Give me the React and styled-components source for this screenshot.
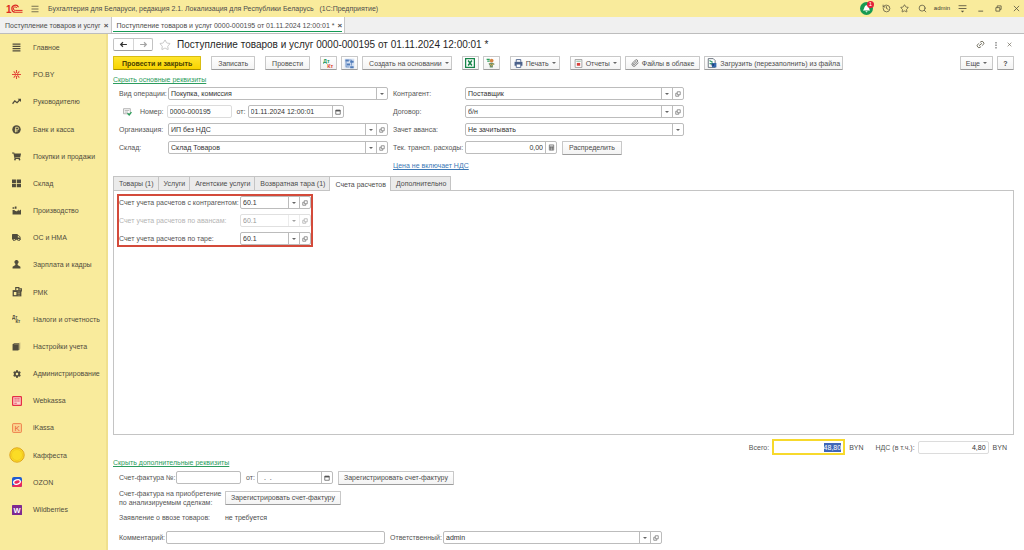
import React, { useEffect, useRef } from 'react';
import styled, { createGlobalStyle, css } from 'styled-components';
import { History, Link2, Paperclip, Search, Star } from 'lucide-react';
import { FaCog, FaShoppingCart, FaTruck } from 'react-icons/fa';

const GlobalStyle = createGlobalStyle`
  * {
    box-sizing: border-box;
  }

  body {
    margin: 0;
    background: #fff;
    color: #4c4c4c;
    font-family: 'Liberation Sans', Arial, sans-serif;
    font-size: 7px;
    line-height: 9px;
  }

  button, input, select {
    margin: 0;
    padding: 0;
    border: 0;
    background: none;
    color: inherit;
    font: inherit;
  }

  svg {
    display: block;
    flex: none;
  }
`;

const Page = styled.div`
  display: flex;
  flex-direction: column;
  min-height: 100vh;
`;

const TitleBar = styled.header`
  display: flex;
  align-items: center;
  gap: 8px;
  height: 17px;
  padding: 0 3px 0 6px;
  background: #f9eb9c;
`;

const AppTitle = styled.span`
  flex: 1;
  padding-left: 1px;
  white-space: pre;
`;

const IconButton = styled.button`
  position: relative;
  display: flex;
  align-items: center;
  justify-content: center;
  width: ${(p) => p.$width || 10}px;
  height: 14px;
  color: #55513f;
`;

const UserButton = styled(IconButton)`
  width: 14px;
  color: #3f3b2c;
  font-size: 6px;
`;

const Badge = styled.span`
  position: absolute;
  top: -1px;
  right: -1px;
  width: 7px;
  height: 7px;
  border-radius: 50%;
  background: #e3203a;
  color: #fff;
  font-size: 6px;
  line-height: 7px;
  text-align: center;
`;

const WindowTabs = styled.nav`
  display: flex;
  height: 17px;
  border-bottom: 1px solid #bdbdbd;
  background: #f0f0f0;
`;

const WindowTab = styled.div`
  position: relative;
  display: flex;
  align-items: center;
  gap: 3px;
  padding: 0 2px 0 5px;
  border-right: 1px solid #c6c6c6;
  white-space: nowrap;

  ${(p) =>
    p.$active &&
    css`
      background: #fff;

      &::after {
        position: absolute;
        right: 2px;
        bottom: 1px;
        left: 1px;
        height: 1px;
        background: #159a55;
        content: '';
      }
    `}
`;

const CloseButton = styled.button`
  width: 5px;
  font-size: 8px;
  font-weight: bold;
  line-height: 9px;
`;

const Body = styled.div`
  display: flex;
  flex: 1;
`;

const Sidebar = styled.nav`
  display: flex;
  flex-direction: column;
  flex: none;
  width: 108px;
  padding-bottom: 27px;
  border-right: 2px solid #f0e08e;
  background: #f9eb9c;
`;

const SideLink = styled.a`
  display: flex;
  flex: 1;
  align-items: center;
  color: #504c3c;
  text-decoration: none;
  white-space: nowrap;
`;

const SideIcon = styled.span`
  display: flex;
  justify-content: center;
  width: 33px;
`;

const Main = styled.main`
  display: flex;
  flex: 1;
  flex-direction: column;
  min-width: 0;
  padding: 4px 10px 6px 5px;
`;

const DocHeader = styled.div`
  display: flex;
  align-items: center;
  height: 13px;
`;

const NavButtons = styled.div`
  display: flex;
  margin-right: 6px;
  border: 1px solid #c3c3c3;
  border-bottom-color: #9f9f9f;
  border-radius: 2px;
`;

const NavButton = styled.button`
  display: flex;
  align-items: center;
  justify-content: center;
  width: 19px;
  height: 11px;
  color: ${(p) => (p.disabled ? '#a5a5a5' : '#333')};

  & + & {
    border-left: 1px solid #d5d5d5;
  }
`;

const DocTitle = styled.h1`
  flex: 1;
  margin: 0 0 0 6px;
  color: #1f1f1f;
  font-size: 10px;
  font-weight: normal;
  line-height: 13px;
`;

const Toolbar = styled.div`
  display: flex;
  gap: 4px;
  margin: 5px 0;
`;

const ToolGroup = styled.div`
  display: flex;
  gap: ${(p) => p.$gap || 4}px;
  margin-right: 6px;
`;

const Spacer = styled.span`
  flex: 1;
`;

const Button = styled.button`
  display: inline-flex;
  align-items: center;
  justify-content: center;
  gap: 3px;
  height: 14px;
  padding: 0 ${(p) => p.$pad || 5}px;
  border: 1px solid #c8c8c8;
  border-bottom-color: #9c9c9c;
  border-radius: 1px;
  background: linear-gradient(#fff, #f3f3f3);
  white-space: nowrap;

  ${(p) =>
    p.$primary &&
    css`
      border-color: #d9bd12;
      border-bottom-color: #a88e00;
      background: linear-gradient(#ffe52e, #f8d400);
      color: #4a4000;
      font-weight: bold;
    `}
`;

const SquareButton = styled(Button)`
  width: 17px;
  padding: 0;
`;

const MenuButton = styled(Button)`
  padding: 0 2px 0 6px;
`;

const Caret = styled.span`
  width: 0;
  height: 0;
  border: 2px solid transparent;
  border-top-color: #666;
  border-bottom: 0;
`;

const ToggleLink = styled.a`
  align-self: flex-start;
  height: 10px;
  color: #2c9c5e;
  line-height: 10px;
`;

const PriceLink = styled.a`
  color: #3c78b5;
`;

const HeaderForm = styled.div`
  display: grid;
  grid-template-columns: minmax(200px, 269px) minmax(200px, 291px);
  gap: 5px;
  margin: 2px 0 4px 6px;
`;

const Row = styled.div`
  display: flex;
  align-items: center;
  min-width: 0;
  height: 13px;
`;

const Label = styled.label`
  flex: none;
  width: ${(p) => (p.$width ? `${p.$width}px` : 'auto')};
  padding-right: ${(p) => (p.$width ? 0 : 3)}px;
  color: ${(p) => (p.$muted ? '#b4b4b4' : '#555')};
  white-space: nowrap;
`;

const DateLabel = styled(Label)`
  width: 16px;
  padding-left: 5px;
`;

const ResponsibleLabel = styled(Label)`
  width: 58px;
  padding-left: 5px;
`;

const StateMark = styled.span`
  display: flex;
  width: 21px;
  padding-left: 4px;
`;

const FieldBox = styled.span`
  display: flex;
  flex: ${(p) => (p.$width ? 'none' : 1)};
  width: ${(p) => (p.$width ? `${p.$width}px` : 'auto')};
  min-width: 0;
  height: 13px;
  border: 1px solid ${(p) => (p.$muted ? '#e0e0e0' : '#bcbcbc')};
  border-radius: 2px;
  background: #fff;
  color: ${(p) => (p.$muted ? '#999' : '#333')};

  input, select {
    flex: 1;
    width: 0;
    min-width: 0;
    padding: 0 2px;
    appearance: none;
    outline: none;
    text-align: ${(p) => (p.$right ? 'right' : 'left')};
  }
`;

const FieldButton = styled.button`
  display: flex;
  align-items: center;
  justify-content: center;
  width: 11px;
  border-left: 1px solid ${(p) => (p.disabled ? '#e0e0e0' : '#bcbcbc')};
  opacity: ${(p) => (p.disabled ? 0.6 : 1)};
`;

const SelectMark = styled(FieldButton).attrs({ as: 'span' })`
  pointer-events: none;
`;

const ReadOnlyBox = styled(FieldBox)`
  border-color: #dcdcdc;
  color: #333;
`;

const ActiveBox = styled(FieldBox)`
  height: 16px;
  border: 2px solid #f7d92c;
  border-radius: 0;

  input::selection {
    background: #3f66b8;
    color: #fff;
  }
`;

const TabList = styled.div`
  display: flex;
  height: 14px;
`;

const Tab = styled.button`
  position: relative;
  height: ${(p) => (p.$active ? 15 : 14)}px;
  padding: 0 4px 0 5px;
  border: 1px solid #c4c4c4;
  border-left-width: ${(p) => (p.$first ? 1 : 0)}px;
  border-bottom-width: 0;
  background: ${(p) => (p.$active ? '#fff' : '#ebebeb')};
  white-space: nowrap;
`;

const TabPanel = styled.section`
  flex: 1;
  padding: 3px;
  border: 1px solid #c4c4c4;
`;

const Accounts = styled.div`
  display: flex;
  flex-direction: column;
  gap: 5px;
  width: 196px;
  border: 2px solid #d34a3a;
`;

const Totals = styled.div`
  display: flex;
  align-items: center;
  justify-content: flex-end;
  height: 16px;
  margin: 4px 7px 3px 0;
`;

const Currency = styled.span`
  margin: 0 12px 0 4px;

  &:last-child {
    margin-right: 0;
  }
`;

const FooterForm = styled.div`
  display: flex;
  flex-direction: column;
  gap: 7px;
  margin: 3px 0 0 6px;
`;

const StackedLabel = styled.span`
  width: 106px;
  color: #555;
`;

const RowButton = styled(Button)`
  margin-left: 5px;
`;

const svgProps = (size) => ({ width: size, height: size, viewBox: '0 0 16 16', fill: 'none', 'aria-hidden': true });

const LogoIcon = () => (
  <svg width="17" height="12" viewBox="0 0 34 24" fill="none" stroke="#dc2b25" aria-hidden="true">
    <text x="0" y="19" fill="#dc2b25" stroke="none" fontSize="20" fontWeight="bold">1</text>
    <path d="M25 8.500a7 7 0 1 0-6 10h14" strokeWidth="2.400" />
    <path d="M21.500 10a3.500 3.500 0 1 0-3 4.800h14.500" strokeWidth="2" />
  </svg>
);

const MenuIcon = () => (
  <svg {...svgProps(8)} stroke="#55513f" strokeWidth="1.600">
    <path d="M1 2.500h14M1 8h14M1 13.500h14" />
  </svg>
);

const BellIcon = () => (
  <svg {...svgProps(13)}>
    <circle cx="8" cy="8" r="8" fill="#169a52" />
    <path d="M3.500 10.500c2-1.500 1.500-6 4.500-6.500s3 5 4.500 6.500zM6.500 11.500h3l-1.500 1.500z" fill="#fff" />
  </svg>
);

const SettingsLinesIcon = () => (
  <svg {...svgProps(9)} stroke="currentColor" strokeWidth="1.500">
    <path d="M1 3h14M1 8h14" />
    <path d="M5 12h6l-3 3z" fill="currentColor" stroke="none" />
  </svg>
);

const MinimizeIcon = () => (
  <svg {...svgProps(7)} stroke="currentColor" strokeWidth="2">
    <path d="M3 14h11" />
  </svg>
);

const RestoreIcon = () => (
  <svg {...svgProps(7)} stroke="currentColor" strokeWidth="1.800">
    <path d="M2 6h9v8H2zM5 6V2h9v8h-3" />
  </svg>
);

const CrossIcon = ({ size = 7 }) => (
  <svg {...svgProps(size)} stroke="currentColor" strokeWidth="1.800">
    <path d="M2 2l12 12M14 2L2 14" />
  </svg>
);

const DotsIcon = () => (
  <svg {...svgProps(8)} fill="#555">
    <path d="M7 2h2v3H7zM7 7h2v3H7zM7 12h2v3H7z" />
  </svg>
);

const ArrowIcon = ({ flip }) => (
  <svg {...svgProps(9)} stroke="currentColor" strokeWidth="2.200">
    <path d={flip ? 'M2 8h11M9 4l4 4-4 4' : 'M14 8H3M7 4L3 8l4 4'} />
  </svg>
);

const OpenIcon = () => (
  <svg {...svgProps(6)} stroke="#777" strokeWidth="2">
    <path d="M6 2h8v8H6zM6 6H2v8h8v-4" />
  </svg>
);

const CalendarIcon = () => (
  <svg {...svgProps(6)} stroke="#555" strokeWidth="2">
    <path d="M2 3h12v11H2z" />
    <path d="M2 4.500h12" strokeWidth="4" />
  </svg>
);

const CalculatorIcon = () => (
  <svg {...svgProps(7)} stroke="#666" strokeWidth="1.600">
    <path d="M3 2h10v12H3zM3 5h10M6 6v8M10 6v8M3 8h10M3 11h10" />
  </svg>
);

const DtKtIcon = ({ colored, size = 11 }) => (
  <svg {...svgProps(size)} fontSize="8" fontWeight="bold">
    <text x="0" y="7" fill={colored ? '#1e9a58' : '#504c3c'}>Дт</text>
    <text x="6" y="15" fill={colored ? '#e0442c' : '#504c3c'}>Кт</text>
  </svg>
);

const StructureIcon = () => (
  <svg {...svgProps(11)}>
    <path d="M1 1h14v14H1z" fill="#d5e1f2" />
    <path d="M2 2h5v3H2zM9 4h5v3H9zM4 8h5v3H4zM9 12h5v3H9z" fill="#507bb8" />
    <path d="M3 5v8h5M7 3h4v8" stroke="#507bb8" />
  </svg>
);

const ExcelIcon = () => (
  <svg {...svgProps(10)}>
    <path d="M1 1h14v14H1z" stroke="#178549" strokeWidth="2" fill="#fff" />
    <path d="M5 4l6 8M11 4l-6 8" stroke="#178549" strokeWidth="2.400" />
  </svg>
);

const PersonDocIcon = () => (
  <svg {...svgProps(10)}>
    <path d="M1 2h5M2 5h4" stroke="#2e9e5c" strokeWidth="2" />
    <circle cx="9" cy="4" r="3" fill="#d78342" />
    <path d="M4 9c2-2 8-2 10 1l-3 1v4H6v-3z" fill="#6d8f6b" />
    <path d="M6 9l3 3 3-3" stroke="#e5b24a" strokeWidth="1.500" />
  </svg>
);

const PrinterIcon = () => (
  <svg {...svgProps(9)}>
    <path d="M4 5V1h8v4" stroke="#4b618a" strokeWidth="1.600" />
    <path d="M1 5h14v7H1z" fill="#4b618a" />
    <path d="M4 9h8v6H4z" fill="#fff" stroke="#4b618a" strokeWidth="1.500" />
  </svg>
);

const ReportIcon = () => (
  <svg {...svgProps(9)}>
    <path d="M2 1h12v14H2z" fill="#fff" stroke="#8f8f8f" strokeWidth="1.400" />
    <path d="M4 4h8" stroke="#7faf91" strokeWidth="1.500" />
    <path d="M5 7h6v5H5z" fill="#d8413b" />
  </svg>
);

const ImportIcon = () => (
  <svg {...svgProps(10)}>
    <path d="M2 1h8l3 3v11H2z" fill="#fff" stroke="#5c6672" strokeWidth="1.400" />
    <path d="M4 4l5 3M4 9h5" stroke="#3b9d72" strokeWidth="2" />
    <path d="M8 8h7v7H8z" fill="#3267ad" />
    <path d="M6 11h5M9 9l2 2-2 2" stroke="#1d3f72" strokeWidth="1.500" />
  </svg>
);

const PostedIcon = () => (
  <svg {...svgProps(9)}>
    <path d="M1 3h12v9H1zM3 6h8M3 9h6" stroke="#929292" strokeWidth="1.200" />
    <path d="M8 11l3 3 4-5" stroke="#2ca05a" strokeWidth="2.400" />
  </svg>
);

const ListIcon = () => (
  <svg {...svgProps(9)} stroke="#504c3c" strokeWidth="2">
    <path d="M1 2h14M1 6h14M1 10h14M1 14h14" />
  </svg>
);

const SparkIcon = () => (
  <svg {...svgProps(9)} stroke="#e2483a" strokeWidth="1.800">
    <path d="M8 0v5.500M8 10.500v5.500M0 8h16M3 2.500l3.500 4M9.500 9.500l3.500 4M13 2.500l-3.500 4M6.500 9.500l-3.500 4" />
  </svg>
);

const TrendIcon = () => (
  <svg {...svgProps(9)} stroke="#504c3c" strokeWidth="2.200">
    <path d="M1 12l4-5 4 3 5-5" />
    <path d="M10 3h6v6z" fill="#504c3c" stroke="none" />
  </svg>
);

const CoinIcon = () => (
  <svg {...svgProps(9)}>
    <circle cx="8" cy="8" r="7.500" fill="#504c3c" />
    <path d="M6.500 13V4h3a2.300 2.300 0 0 1 0 4.600H5M5 10.800h5" stroke="#f9eb9c" strokeWidth="1.500" />
  </svg>
);

const WarehouseIcon = () => (
  <svg {...svgProps(9)} fill="#504c3c">
    <path d="M0 1h7v6H0zM8.500 1H16v6H8.500zM0 8.500h7v6H0zM8.500 8.500H16v6H8.500z" />
  </svg>
);

const FactoryIcon = () => (
  <svg {...svgProps(9)} fill="#504c3c">
    <path d="M1 15V7h3l2 2h2v1l4-4v3l4-3v9zM1 2h3v3H1zM5 1h3v4H5z" />
  </svg>
);

const PersonIcon = () => (
  <svg {...svgProps(9)} fill="#504c3c">
    <path d="M8 0a3.500 3.500 0 0 1 2 6.500V9l5 3v3H1v-3l5-3V6.500A3.500 3.500 0 0 1 8 0z" />
  </svg>
);

const RegisterIcon = () => (
  <svg {...svgProps(10)}>
    <path d="M1 5h14v10H1z" fill="#504c3c" />
    <path d="M6 5V1h5v4M12 3h3v4" stroke="#504c3c" strokeWidth="1.800" />
    <path d="M3 8h4v5H3z" fill="#f9eb9c" />
    <path d="M9 8h4M9 10.500h4M9 13h4" stroke="#a79c6c" strokeWidth="1.200" />
  </svg>
);

const BooksIcon = () => (
  <svg {...svgProps(9)}>
    <path d="M1 4l3-2h9v11l-2 2H1z" fill="#504c3c" />
    <path d="M4 4h8v10M14 1v11" stroke="#a79c6c" />
  </svg>
);

const WebkassaIcon = () => (
  <svg {...svgProps(10)}>
    <rect x="1" y="1" width="14" height="14" rx="1" fill="#fbd3cf" stroke="#e52f45" strokeWidth="2" />
    <path d="M4 4.500h8M4 8h8M4 11.500h4" stroke="#e52f45" strokeWidth="1.800" strokeDasharray="2 1" />
  </svg>
);

const IKassaIcon = () => (
  <svg {...svgProps(10)}>
    <rect x="1" y="1" width="14" height="14" rx="1" fill="#fbd792" stroke="#ee7a46" strokeWidth="1.500" />
    <text x="4" y="13" fill="#e95f35" fontSize="13">K</text>
  </svg>
);

const KaffestaIcon = () => (
  <svg {...svgProps(16)}>
    <circle cx="8" cy="8" r="7.200" fill="#fbdc25" stroke="#dfa41c" />
    <circle cx="8" cy="8" r="5.500" stroke="#edbd1c" strokeWidth="0.600" />
  </svg>
);

const OzonIcon = () => (
  <svg {...svgProps(10)}>
    <rect width="16" height="16" rx="3" fill="#1f5bd0" />
    <path d="M0 13C8 13 13 9 16 6v7a3 3 0 0 1-3 3H3a3 3 0 0 1-3-3z" fill="#e9285c" />
    <ellipse cx="8" cy="8" rx="5.500" ry="3.500" stroke="#fff" strokeWidth="2" fill="#e9285c" transform="rotate(-18 8 8)" />
  </svg>
);

const WildberriesIcon = () => (
  <svg {...svgProps(10)}>
    <rect width="16" height="16" rx="1" fill="#7d2a91" />
    <text x="8" y="12.500" fill="#fff" fontSize="12" fontWeight="bold" textAnchor="middle">W</text>
  </svg>
);

const sections = [
  ['Главное', <ListIcon />],
  ['PO.BY', <SparkIcon />],
  ['Руководителю', <TrendIcon />],
  ['Банк и касса', <CoinIcon />],
  ['Покупки и продажи', <FaShoppingCart size={9} />],
  ['Склад', <WarehouseIcon />],
  ['Производство', <FactoryIcon />],
  ['ОС и НМА', <FaTruck size={9} />],
  ['Зарплата и кадры', <PersonIcon />],
  ['РМК', <RegisterIcon />],
  ['Налоги и отчетность', <DtKtIcon size={9} />],
  ['Настройки учета', <BooksIcon />],
  ['Администрирование', <FaCog size={8} />],
  ['Webkassa', <WebkassaIcon />],
  ['iKassa', <IKassaIcon />],
  ['Каффеста', <KaffestaIcon />],
  ['OZON', <OzonIcon />],
  ['Wildberries', <WildberriesIcon />],
];

const tabs = [
  'Товары (1)',
  'Услуги',
  'Агентские услуги',
  'Возвратная тара (1)',
  'Счета расчетов',
  'Дополнительно',
];

// Поле со ссылкой на справочник: выбор из списка и открытие карточки
function RefField({ id, value, width, disabled }) {
  return (
    <FieldBox $width={width} $muted={disabled}>
      <input id={id} defaultValue={value} disabled={disabled} />
      <FieldButton type="button" aria-label="Выбрать" disabled={disabled}>
        <Caret />
      </FieldButton>
      <FieldButton type="button" aria-label="Открыть" disabled={disabled}>
        <OpenIcon />
      </FieldButton>
    </FieldBox>
  );
}

function SelectField({ id, value }) {
  return (
    <FieldBox>
      <select id={id} defaultValue={value}>
        <option>{value}</option>
      </select>
      <SelectMark>
        <Caret />
      </SelectMark>
    </FieldBox>
  );
}

function DateField({ id, value, width }) {
  return (
    <FieldBox $width={width}>
      <input id={id} defaultValue={value} />
      <FieldButton type="button" aria-label="Календарь">
        <CalendarIcon />
      </FieldButton>
    </FieldBox>
  );
}

function App() {
  const totalRef = useRef(null);

  useEffect(() => {
    totalRef.current.focus();
    totalRef.current.select();
  }, []);

  return (
    <Page>
      <GlobalStyle />
      <TitleBar>
        <LogoIcon />
        <MenuIcon />
        <AppTitle>Бухгалтерия для Беларуси, редакция 2.1. Локализация для Республики Беларусь   (1С:Предприятие)</AppTitle>
        <IconButton $width={13} aria-label="Уведомления">
          <BellIcon />
          <Badge>1</Badge>
        </IconButton>
        <IconButton aria-label="История"><History size={9} /></IconButton>
        <IconButton aria-label="Избранное"><Star size={9} /></IconButton>
        <IconButton aria-label="Поиск"><Search size={9} /></IconButton>
        <UserButton>admin</UserButton>
        <IconButton aria-label="Настройки"><SettingsLinesIcon /></IconButton>
        <IconButton aria-label="Свернуть"><MinimizeIcon /></IconButton>
        <IconButton aria-label="Развернуть"><RestoreIcon /></IconButton>
        <IconButton aria-label="Закрыть"><CrossIcon /></IconButton>
      </TitleBar>
      <WindowTabs>
        <WindowTab>
          Поступление товаров и услуг
          <CloseButton aria-label="Закрыть вкладку">×</CloseButton>
        </WindowTab>
        <WindowTab $active>
          Поступление товаров и услуг 0000-000195 от 01.11.2024 12:00:01 *
          <CloseButton aria-label="Закрыть вкладку">×</CloseButton>
        </WindowTab>
      </WindowTabs>
      <Body>
        <Sidebar>
          {sections.map(([name, icon]) => (
            <SideLink key={name} href="#">
              <SideIcon>{icon}</SideIcon>
              {name}
            </SideLink>
          ))}
        </Sidebar>
        <Main>
          <DocHeader>
            <NavButtons>
              <NavButton aria-label="Назад"><ArrowIcon /></NavButton>
              <NavButton aria-label="Вперед" disabled><ArrowIcon flip /></NavButton>
            </NavButtons>
            <Star size={12} color="#b5b5b5" strokeWidth={1.5} />
            <DocTitle>Поступление товаров и услуг 0000-000195 от 01.11.2024 12:00:01 *</DocTitle>
            <IconButton $width={16} aria-label="Ссылка"><Link2 size={9} transform="rotate(-40)" /></IconButton>
            <IconButton $width={16} aria-label="Действия"><DotsIcon /></IconButton>
            <IconButton aria-label="Закрыть"><CrossIcon size={5} /></IconButton>
          </DocHeader>

          <Toolbar>
            <ToolGroup $gap={10}>
              <Button $primary $pad={8}>Провести и закрыть</Button>
              <Button $pad={6}>Записать</Button>
              <Button $pad={6}>Провести</Button>
            </ToolGroup>
            <ToolGroup>
              <SquareButton aria-label="Дт/Кт"><DtKtIcon colored /></SquareButton>
              <SquareButton aria-label="Структура"><StructureIcon /></SquareButton>
              <MenuButton>Создать на основании<Caret /></MenuButton>
            </ToolGroup>
            <ToolGroup>
              <SquareButton aria-label="Excel"><ExcelIcon /></SquareButton>
              <SquareButton aria-label="Сотрудник"><PersonDocIcon /></SquareButton>
            </ToolGroup>
            <ToolGroup>
              <Button $pad={3}><PrinterIcon />Печать<Caret /></Button>
            </ToolGroup>
            <Button $pad={3}><ReportIcon />Отчеты<Caret /></Button>
            <Button><Paperclip size={8} />Файлы в облаке</Button>
            <Button $pad={2}><ImportIcon />Загрузить (перезаполнить) из файла</Button>
            <Spacer />
            <Button>Еще<Caret /></Button>
            <SquareButton><b>?</b></SquareButton>
          </Toolbar>

          <ToggleLink href="#">Скрыть основные реквизиты</ToggleLink>
          <HeaderForm>
            <Row>
              <Label htmlFor="operation" $width={49}>Вид операции:</Label>
              <SelectField id="operation" value="Покупка, комиссия" />
            </Row>
            <Row>
              <Label htmlFor="partner" $width={72}>Контрагент:</Label>
              <RefField id="partner" value="Поставщик" />
            </Row>
            <Row>
              <StateMark><PostedIcon /></StateMark>
              <Label htmlFor="number">Номер:</Label>
              <ReadOnlyBox $width={65}>
                <input id="number" defaultValue="0000-000195" readOnly />
              </ReadOnlyBox>
              <DateLabel htmlFor="date">от:</DateLabel>
              <DateField id="date" value="01.11.2024 12:00:01" width={96} />
            </Row>
            <Row>
              <Label htmlFor="contract" $width={72}>Договор:</Label>
              <RefField id="contract" value="б/н" />
            </Row>
            <Row>
              <Label htmlFor="company" $width={49}>Организация:</Label>
              <RefField id="company" value="ИП без НДС" />
            </Row>
            <Row>
              <Label htmlFor="advance" $width={72}>Зачет аванса:</Label>
              <SelectField id="advance" value="Не зачитывать" />
            </Row>
            <Row>
              <Label htmlFor="store" $width={49}>Склад:</Label>
              <RefField id="store" value="Склад Товаров" />
            </Row>
            <Row>
              <Label htmlFor="transport" $width={72}>Тек. трансп. расходы:</Label>
              <FieldBox $width={92} $right>
                <input id="transport" defaultValue="0,00" />
                <FieldButton type="button" aria-label="Калькулятор">
                  <CalculatorIcon />
                </FieldButton>
              </FieldBox>
              <RowButton $pad={6}>Распределить</RowButton>
            </Row>
            <span />
            <Row>
              <PriceLink href="#">Цена не включает НДС</PriceLink>
            </Row>
          </HeaderForm>

          <TabList role="tablist">
            {tabs.map((name, index) => (
              <Tab
                key={name}
                role="tab"
                aria-selected={name === 'Счета расчетов'}
                $active={name === 'Счета расчетов'}
                $first={index === 0}
              >
                {name}
              </Tab>
            ))}
          </TabList>
          <TabPanel>
            <Accounts>
              <Row>
                <Label htmlFor="acc-partner" $width={121}>Счет учета расчетов с контрагентом:</Label>
                <RefField id="acc-partner" value="60.1" />
              </Row>
              <Row>
                <Label htmlFor="acc-advance" $width={121} $muted>Счет учета расчетов по авансам:</Label>
                <RefField id="acc-advance" value="60.1" disabled />
              </Row>
              <Row>
                <Label htmlFor="acc-tare" $width={121}>Счет учета расчетов по таре:</Label>
                <RefField id="acc-tare" value="60.1" />
              </Row>
            </Accounts>
          </TabPanel>

          <Totals>
            <Label htmlFor="total">Всего:</Label>
            <ActiveBox $width={73} $right>
              <input id="total" ref={totalRef} defaultValue="48,80" />
            </ActiveBox>
            <Currency>BYN</Currency>
            <Label htmlFor="vat">НДС (в т.ч.):</Label>
            <ReadOnlyBox $width={71} $right>
              <input id="vat" defaultValue="4,80" readOnly />
            </ReadOnlyBox>
            <Currency>BYN</Currency>
          </Totals>

          <ToggleLink href="#">Скрыть дополнительные реквизиты</ToggleLink>
          <FooterForm>
            <Row>
              <Label htmlFor="invoice" $width={57}>Счет-фактура №:</Label>
              <FieldBox $width={65}>
                <input id="invoice" />
              </FieldBox>
              <DateLabel htmlFor="invoice-date">от:</DateLabel>
              <DateField id="invoice-date" value="  .  ." width={76} />
              <RowButton>Зарегистрировать счет-фактуру</RowButton>
            </Row>
            <Row>
              <StackedLabel>Счет-фактура на приобретение<br />по анализируемым сделкам:</StackedLabel>
              <Button>Зарегистрировать счет-фактуру</Button>
            </Row>
            <Row>
              <StackedLabel>Заявление о ввозе товаров:</StackedLabel>
              не требуется
            </Row>
            <Row>
              <Label htmlFor="comment" $width={47}>Комментарий:</Label>
              <FieldBox $width={219}>
                <input id="comment" />
              </FieldBox>
              <ResponsibleLabel htmlFor="responsible">Ответственный:</ResponsibleLabel>
              <RefField id="responsible" value="admin" width={219} />
            </Row>
          </FooterForm>
        </Main>
      </Body>
    </Page>
  );
}

export default App;
